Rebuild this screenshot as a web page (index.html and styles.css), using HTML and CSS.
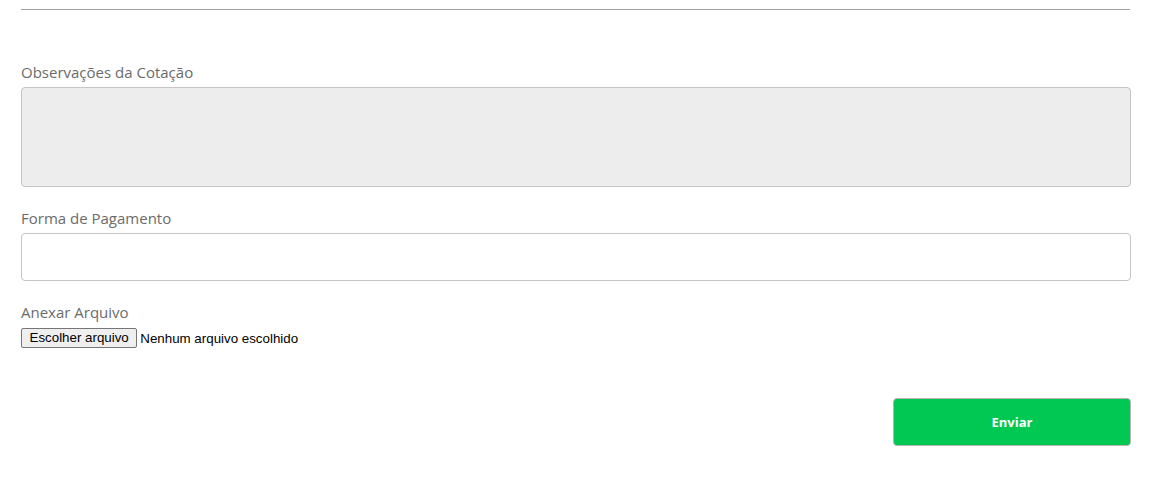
FILE: index.html
```html
<!DOCTYPE html>
<html lang="pt">
<head>
<meta charset="utf-8">
<link rel="stylesheet" href="styles.css">
</head>
<body>
<div class="page">
  <hr class="divider">
  <div class="field field-first">
    <label class="label">Observações da Cotação</label>
    <div class="textarea"></div>
  </div>
  <div class="field">
    <label class="label">Forma de Pagamento</label>
    <div class="input"></div>
  </div>
  <div class="field">
    <label class="label">Anexar Arquivo</label>
    <div class="file">
      <span class="file-btn">Escolher arquivo</span>
      <span class="file-name">Nenhum arquivo escolhido</span>
    </div>
  </div>
  <div class="actions">
    <button class="submit">Enviar</button>
  </div>
</div>
</body>
</html>
```

FILE: styles.css
```css
html, body {
  margin: 0;
  padding: 0;
  background: #fff;
}
.page {
  width: 1110px;
  margin-left: 21px;
  padding-top: 9px;
  display: flex;
  flex-direction: column;
}
.divider {
  margin: 0;
  border: 0;
  border-top: 1px solid #a0a0a0;
  width: 1109px;
}
.field {
  display: flex;
  flex-direction: column;
  margin-top: 21px;
}
.field-first {
  margin-top: 52px;
}
.label {
  font-family: "Open Sans", sans-serif;
  font-size: 15px;
  line-height: 20px;
  color: #6b6b6b;
  margin-bottom: 5px;
}
.textarea {
  height: 98px;
  background: #ededed;
  border: 1px solid #c4c4c4;
  border-radius: 4px;
}
.input {
  height: 46px;
  background: #fff;
  border: 1px solid #c4c4c4;
  border-radius: 4px;
}
.file {
  display: flex;
  align-items: center;
  padding-top: 1px;
  font-family: "Liberation Sans", Arial, sans-serif;
  font-size: 13.33px;
  color: #000;
}
.file-btn {
  box-sizing: border-box;
  height: 20px;
  padding: 0 7.5px;
  line-height: 18px;
  background: #efefef;
  border: 1px solid #767676;
  border-radius: 2px;
  color: #000;
}
.file-name {
  margin-left: 3px;
}
.actions {
  display: flex;
  justify-content: flex-end;
  margin-top: 50px;
}
.submit {
  width: 238px;
  height: 48px;
  background: #00c853;
  border: 1px solid #b5b5b5;
  border-radius: 4px;
  color: #fff;
  font-family: "Open Sans", sans-serif;
  font-weight: 700;
  font-size: 13px;
}
```
